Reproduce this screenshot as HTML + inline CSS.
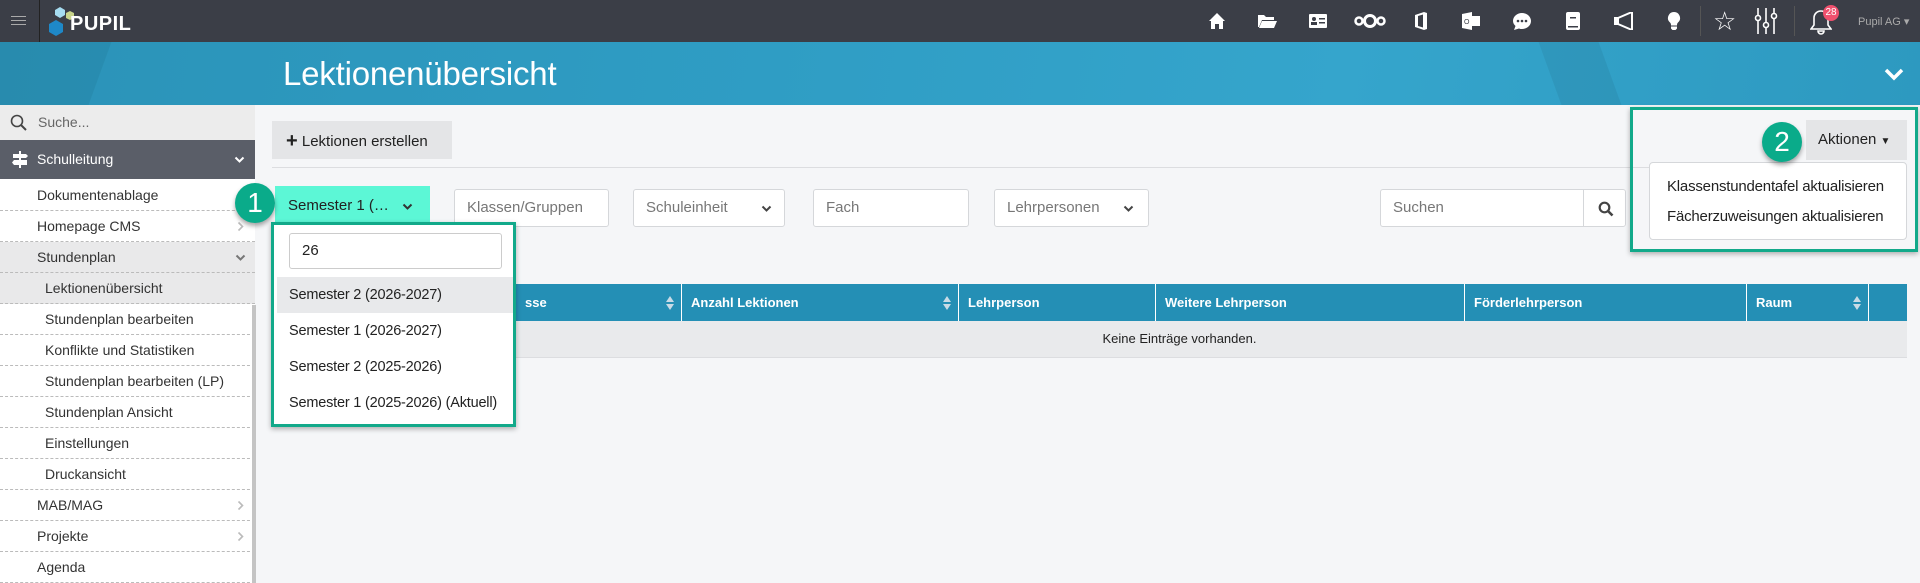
<!DOCTYPE html>
<html><head><meta charset="utf-8"><style>
*{box-sizing:border-box;margin:0;padding:0}
body{width:1920px;height:583px;overflow:hidden;background:#f5f6f8;font-family:"Liberation Sans",sans-serif;position:relative;color:#222}
.a{position:absolute}
.top{left:0;top:0;width:1920px;height:42px;background:#3b3e47}
.ban{left:0;top:42px;width:1920px;height:63px;background:linear-gradient(100deg,#2b93b8 0%,#2f9dc4 40%,#35a5cc 70%,#2d99c0 100%);overflow:hidden}
.side{left:0;top:105px;width:255px;height:478px;background:#fff}
.si{position:absolute;left:0;width:255px;height:31px;border-bottom:1px dashed #bbb;font-size:14px;line-height:31px;color:#333}
.inp{position:absolute;background:#fff;border:1px solid #d5d7da;border-radius:3px;font-size:15px;color:#777;padding-left:12px;line-height:36px;height:38px}
.th{position:absolute;top:284px;height:37px;line-height:37px;color:#fff;font-weight:bold;font-size:13px;border-right:1px solid #fff;padding-left:9px}
.badge{position:absolute;width:40px;height:40px;border-radius:50%;background:#0aab8a;color:#fff;font-size:28px;text-align:center;line-height:40px;box-shadow:0 3px 5px rgba(0,0,0,.35)}
.ic{position:absolute;top:12px;width:20px;height:18px;fill:#fff}
.chev{position:absolute;width:11px;height:8px}
.srt{position:absolute;right:7px;top:12px;width:8px;height:14px}
</style></head><body>
<svg width="0" height="0" style="position:absolute"><defs><symbol id="cv" viewBox="0 0 11 8"><path d="M1.5 1.5l4 4 4-4" fill="none" stroke="currentColor" stroke-width="2"/></symbol><symbol id="cr" viewBox="0 0 8 11"><path d="M1.5 1.5l4 4-4 4" fill="none" stroke="currentColor" stroke-width="1.6"/></symbol><symbol id="st" viewBox="0 0 8 14"><path d="M4 0l4 6H0zM4 14l4-6H0z" fill="#c8dbe6"/></symbol></defs></svg>
<div class="a top">
 <div class="a" style="left:11px;top:16px;width:15px;height:1px;background:#aaa;box-shadow:0 4px 0 #aaa,0 8px 0 #aaa"></div>
 <div class="a" style="left:39px;top:0;width:1px;height:42px;background:#222"></div>
 <svg class="a" style="left:48px;top:4px" width="30" height="34" viewBox="0 0 30 34"><polygon points="12,3 17,6 17,11 12,14 7,11 7,6" fill="#a6dcf0"/><polygon points="22,7 26,9 26,14 22,16 18,14 18,9" fill="#c8d48a"/><polygon points="8,16 15,20 15,28 8,32 1,28 1,20" fill="#1e88c8"/></svg>
 <div class="a" style="left:70px;top:13px;color:#fff;font-weight:bold;font-size:20px;letter-spacing:0.5px">PUPIL</div>
 <svg class="ic" style="left:1207px" viewBox="0 0 20 18"><path d="M10 1L2 9h2v8h4v-5h4v5h4V9h2z"/></svg>
 <svg class="ic" style="left:1257px" viewBox="0 0 20 18"><path d="M1 3h6l2 2h8v3H5L2 15H1zM5 9h15l-3 7H2z"/></svg>
 <svg class="ic" style="left:1308px" viewBox="0 0 20 18"><rect x="1" y="2" width="18" height="14" rx="1"/><circle cx="6" cy="7" r="2" fill="#3b3e47"/><rect x="3" y="10" width="6" height="3" fill="#3b3e47"/><rect x="11" y="6" width="6" height="1.5" fill="#3b3e47"/><rect x="11" y="10" width="6" height="1.5" fill="#3b3e47"/></svg>
 <svg class="ic" style="left:1354px;width:32px" viewBox="0 0 32 18"><circle cx="5" cy="9" r="3.5" fill="none" stroke="#fff" stroke-width="2.5"/><circle cx="16" cy="9" r="5.5" fill="none" stroke="#fff" stroke-width="3"/><circle cx="27" cy="9" r="3.5" fill="none" stroke="#fff" stroke-width="2.5"/></svg>
 <svg class="ic" style="left:1411px" viewBox="0 0 20 18"><path d="M4 3l9-3 3 1v16l-3 1-9-3 0-13zM7 4v10l5 1.5V2.5z" fill-rule="evenodd"/></svg>
 <svg class="ic" style="left:1461px" viewBox="0 0 20 18"><path d="M1 2l10-2v18L1 16z"/><rect x="11" y="4" width="8" height="10"/><text x="3" y="12" font-size="7" fill="#3b3e47" font-family="Liberation Sans">O</text></svg>
 <svg class="ic" style="left:1512px" viewBox="0 0 20 18"><path d="M10 1c5 0 9 3.5 9 8s-4 8-9 8c-1 0-2 0-3-.5L2 18l1.5-4C2 12.5 1 11 1 9c0-4.5 4-8 9-8z"/><circle cx="6" cy="9" r="1.3" fill="#3b3e47"/><circle cx="10" cy="9" r="1.3" fill="#3b3e47"/><circle cx="14" cy="9" r="1.3" fill="#3b3e47"/></svg>
 <svg class="ic" style="left:1563px" viewBox="0 0 20 18"><rect x="3" y="0" width="14" height="18" rx="2"/><rect x="7" y="5" width="6" height="1.5" fill="#3b3e47"/><rect x="5" y="14" width="10" height="1.5" fill="#3b3e47"/></svg>
 <svg class="ic" style="left:1614px" viewBox="0 0 20 18"><path d="M1 6h2v6H1zM4 6l14-6v18L4 12z" fill="none" stroke="#fff" stroke-width="2"/></svg>
 <svg class="ic" style="left:1664px" viewBox="0 0 20 18"><path d="M10 0a6 6 0 0 1 4 10.5c-1 1-1 2-1 3H7c0-1 0-2-1-3A6 6 0 0 1 10 0zM7 14.5h6v2l-1.5 1.5h-3L7 16.5z"/></svg>
 <div class="a" style="left:1700px;top:6px;width:1px;height:30px;background:#555"></div>
 <div class="a" style="left:1713px;top:6px;color:#fff;font-size:26px">☆</div>
 <svg class="a" style="left:1754px;top:8px" width="24" height="26" viewBox="0 0 24 26"><g stroke="#fff" stroke-width="1.6" fill="#3b3e47"><line x1="4" y1="0" x2="4" y2="26"/><line x1="12" y1="0" x2="12" y2="26"/><line x1="20" y1="0" x2="20" y2="26"/><circle cx="4" cy="10" r="2.5"/><circle cx="12" cy="17" r="2.5"/><circle cx="20" cy="8" r="2.5"/></g></svg>
 <div class="a" style="left:1794px;top:6px;width:1px;height:30px;background:#555"></div>
 <svg class="a" style="left:1810px;top:9px" width="22" height="26" viewBox="0 0 22 26"><path d="M11 2c4 0 7 3 7 7v7l3 4H1l3-4V9c0-4 3-7 7-7zM8 22h6a3 3 0 0 1-6 0z" fill="none" stroke="#fff" stroke-width="1.6"/></svg>
 <div class="a" style="left:1823px;top:5px;width:16px;height:16px;border-radius:50%;background:#f0506e;color:#fff;font-size:10px;text-align:center;line-height:16px">28</div>
 <div class="a" style="left:1858px;top:15px;color:#aaa;font-size:11px">Pupil AG ▾</div>
</div>
<div class="a ban">
 <div class="a" style="left:-40px;top:0;width:140px;height:63px;background:rgba(0,0,0,.05);transform:skewX(-20deg)"></div>
 <div class="a" style="left:1550px;top:0;width:60px;height:63px;background:rgba(0,0,0,.06);transform:skewX(20deg)"></div>
 <div class="a" style="left:283px;top:13px;color:#fff;font-size:33px;font-weight:300;letter-spacing:-0.2px">Lektionenübersicht</div>
 <svg class="a" style="left:1884px;top:26px" width="20" height="14" viewBox="0 0 20 14"><path d="M2 2l8 8 8-8" fill="none" stroke="#fff" stroke-width="3.5"/></svg>
</div>
<div class="a side">
 <div class="a" style="left:0;top:0;width:255px;height:35px;background:#ececec"><svg class="a" style="left:10px;top:9px" width="18" height="18" viewBox="0 0 18 18"><circle cx="7" cy="7" r="5.5" fill="none" stroke="#444" stroke-width="1.6"/><line x1="11" y1="11" x2="16" y2="16" stroke="#444" stroke-width="2"/></svg><span class="a" style="left:38px;top:9px;font-size:14px;color:#666">Suche...</span></div>
 <div class="a" style="left:0;top:35px;width:255px;height:39px;background:#5a5e68;color:#fff;font-size:14px;line-height:39px"><svg class="a" style="left:12px;top:11px" width="16" height="17" viewBox="0 0 16 17"><path d="M7 0h2v17H7zM1 3h13l2 2-2 2H1zM2 9h13v5H2l-2-2.5z" fill="#fff"/></svg><span style="position:absolute;left:37px">Schulleitung</span><svg class="chev" style="left:234px;top:16px;color:#fff"><use href="#cv"/></svg></div>
 <div class="a" style="left:246px;top:47px;width:0;height:0;border:9px solid transparent;border-right-color:#f5f6f8"></div>
</div>
<div class="si" style="top:180px;padding-left:37px">Dokumentenablage</div>
<div class="si" style="top:211px;padding-left:37px">Homepage CMS<svg class="a" style="left:237px;top:10px;color:#bbb" width="8" height="11"><use href="#cr"/></svg></div>
<div class="si" style="top:242px;padding-left:37px;background:#e9e9ea">Stundenplan<svg class="chev" style="left:235px;top:12px;color:#777"><use href="#cv"/></svg></div>
<div class="si" style="top:273px;padding-left:45px;background:#e9e9ea">Lektionenübersicht</div>
<div class="si" style="top:304px;padding-left:45px">Stundenplan bearbeiten</div>
<div class="si" style="top:335px;padding-left:45px">Konflikte und Statistiken</div>
<div class="si" style="top:366px;padding-left:45px">Stundenplan bearbeiten (LP)</div>
<div class="si" style="top:397px;padding-left:45px">Stundenplan Ansicht</div>
<div class="si" style="top:428px;padding-left:45px">Einstellungen</div>
<div class="si" style="top:459px;padding-left:45px">Druckansicht</div>
<div class="si" style="top:490px;padding-left:37px">MAB/MAG<svg class="a" style="left:237px;top:10px;color:#bbb" width="8" height="11"><use href="#cr"/></svg></div>
<div class="si" style="top:521px;padding-left:37px">Projekte<svg class="a" style="left:237px;top:10px;color:#bbb" width="8" height="11"><use href="#cr"/></svg></div>
<div class="si" style="top:552px;padding-left:37px">Agenda</div>
<div class="a" style="left:252px;top:305px;width:4px;height:278px;background:#c4c4c4"></div>

<div class="a" style="left:272px;top:121px;width:180px;height:38px;background:#e4e5e7;font-size:15px;line-height:38px;padding-left:14px"><b style="font-size:20px;position:relative;top:1px">+</b> Lektionen erstellen</div>
<div class="a" style="left:272px;top:167px;width:1635px;height:1px;background:#dcdde0"></div>

<div class="a" style="left:275px;top:186px;width:155px;height:42px;background:#5cf7d6;font-size:15px;line-height:40px;padding-left:13px">Semester 1 (…<svg class="chev" style="left:127px;top:17px;color:#333"><use href="#cv"/></svg></div>
<div class="inp" style="left:454px;top:189px;width:155px">Klassen/Gruppen</div>
<div class="inp" style="left:633px;top:189px;width:152px">Schuleinheit<svg class="chev" style="left:127px;top:15px;color:#444"><use href="#cv"/></svg></div>
<div class="inp" style="left:813px;top:189px;width:156px">Fach</div>
<div class="inp" style="left:994px;top:189px;width:155px">Lehrpersonen<svg class="chev" style="left:128px;top:15px;color:#444"><use href="#cv"/></svg></div>
<div class="inp" style="left:1380px;top:189px;width:246px">Suchen<div class="a" style="left:202px;top:0;width:1px;height:36px;background:#d5d7da"></div><svg class="a" style="left:217px;top:11px" width="16" height="16" viewBox="0 0 16 16"><circle cx="6.5" cy="6.5" r="4.8" fill="none" stroke="#444" stroke-width="2.2"/><line x1="10" y1="10" x2="14.5" y2="14.5" stroke="#444" stroke-width="2.6"/></svg></div>

<div class="a" style="left:272px;top:284px;width:1635px;height:37px;background:#248fb5"></div>
<div class="th" style="left:516px;width:166px">sse<svg class="srt"><use href="#st"/></svg></div>
<div class="th" style="left:682px;width:277px">Anzahl Lektionen<svg class="srt"><use href="#st"/></svg></div>
<div class="th" style="left:959px;width:197px">Lehrperson</div>
<div class="th" style="left:1156px;width:309px">Weitere Lehrperson</div>
<div class="th" style="left:1465px;width:282px">Förderlehrperson</div>
<div class="th" style="left:1747px;width:122px">Raum<svg class="srt"><use href="#st"/></svg></div>
<div class="a" style="left:272px;top:321px;width:1635px;height:37px;background:#e9eaec;border-bottom:1px solid #dcdde0;font-size:13px;line-height:36px;text-align:center;padding-left:180px">Keine Einträge vorhanden.</div>

<div class="a" style="left:271px;top:222px;width:245px;height:205px;border:3px solid #12a98a;background:#fff;box-shadow:0 2px 5px rgba(0,0,0,.3)">
 <div class="a" style="left:15px;top:8px;width:213px;height:36px;border:1px solid #ccc;border-radius:3px;font-size:15px;line-height:34px;padding-left:12px">26</div>
 <div class="a" style="left:3px;top:52px;width:236px;height:36px;background:#e8e9eb"></div>
 <div class="a" style="left:15px;top:61px;font-size:14.5px;line-height:18px;letter-spacing:-0.2px">Semester 2 (2026-2027)<br><br>Semester 1 (2026-2027)<br><br>Semester 2 (2025-2026)<br><br>Semester 1 (2025-2026) (Aktuell)</div>
</div>
<div class="badge" style="left:235px;top:183px">1</div>

<div class="a" style="left:1630px;top:107px;width:288px;height:145px;border:3px solid #12a98a;box-shadow:0 2px 5px rgba(0,0,0,.3)">
 <div class="a" style="left:173px;top:10px;width:101px;height:40px;background:#e4e5e7;font-size:15px;line-height:40px;padding-left:12px">Aktionen <span style="font-size:10px">▼</span></div>
 <div class="a" style="left:16px;top:52px;width:258px;height:78px;background:#fff;border:1px solid #d5d7da;border-radius:4px;font-size:15px;line-height:30px;padding:9px 0 0 17px;letter-spacing:-0.2px">Klassenstundentafel aktualisieren<br>Fächerzuweisungen aktualisieren</div>
</div>
<div class="badge" style="left:1762px;top:122px">2</div>
</body></html>
